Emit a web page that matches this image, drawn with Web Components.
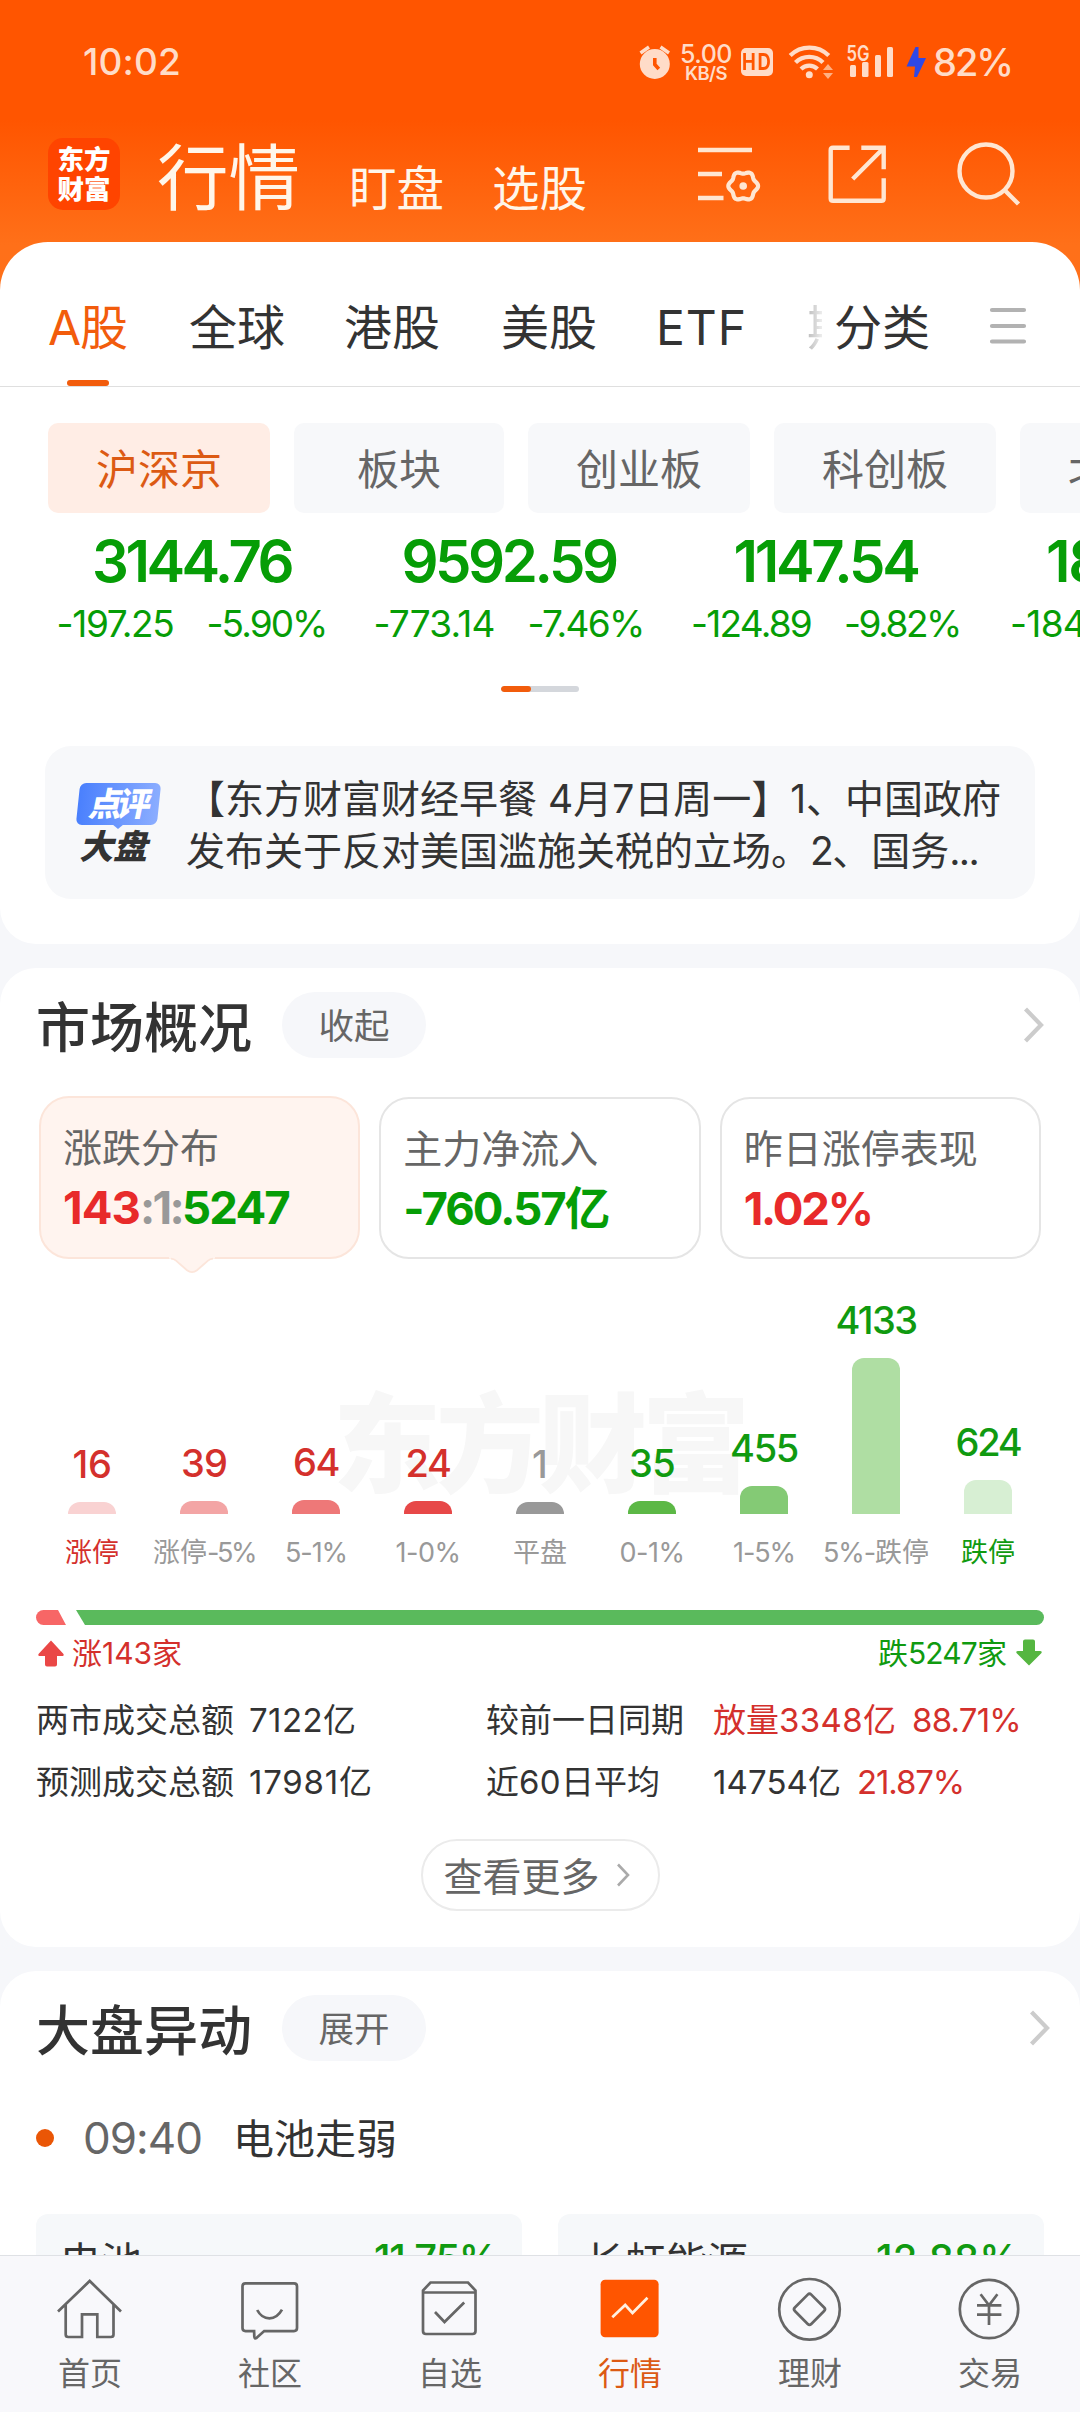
<!DOCTYPE html>
<html lang="zh-CN">
<head>
<meta charset="utf-8">
<title>行情</title>
<style>
html,body{margin:0;padding:0}
body{width:1080px;height:2412px;overflow:hidden;display:flex;flex-direction:column;background:#f6f7fa;
font-family:Inter,"Noto Sans CJK SC",sans-serif;color:#333}
body>*{box-sizing:border-box}
</style>
</head>
<body>
<app-header></app-header>
<market-panel></market-panel>
<overview-panel></overview-panel>
<movement-panel></movement-panel>
<bottom-nav></bottom-nav>
<script>
const BASE = `*{box-sizing:border-box}svg{display:block;overflow:visible;flex:none}ui-text{flex:none}`;
function component(name, css, html) {
  customElements.define(name, class extends HTMLElement {
    constructor() {
      super();
      this.attachShadow({mode: 'open'}).innerHTML = `<style>${BASE}${css}</style>${html}`;
    }
  });
}

// Six-lobed outline of the settings gear.
function gear(cx, cy) {
  let d = '';
  for (let a = 0; a < 360; a += 5) {
    const t = a * Math.PI / 180, r = 13.6 + 1.3 * Math.cos(6 * t);
    d += (a ? 'L' : 'M') + (cx + r * Math.cos(t)).toFixed(2) + ' ' + (cy + r * Math.sin(t)).toFixed(2);
  }
  return d + 'Z';
}

component('status-bar', `
:host{display:flex;height:124px;align-items:center;padding:0 68px 0 83px;color:#ffdcc8}
.r{margin-left:auto;display:flex;align-items:center}
.speed{display:flex;flex-direction:column;align-items:center;margin:0 10px;width:50px}
.speed ui-text+ui-text{margin-top:-3px}
.hd{width:32px;height:28px;border-radius:5px;background:#ffdcc8;color:#ff5500;display:flex;align-items:center;justify-content:center}
.hd ui-text{transform:scaleX(.8);margin:0 -5px}
`, `
<ui-text style="margin-top:-1px" fs="37" w="98" wt="500">10:02</ui-text>
<div class="r">
<svg width="32" height="36" viewBox="639 44 32 36"><circle cx="654.8" cy="64" r="15" fill="#ffdcc8"/><path d="M640.5 53l8.500-6M669 53l-8.500-6" stroke="#ffdcc8" stroke-width="3.400"/><path d="M654.800 58v6.500l4 4.500" fill="none" stroke="#ff5500" stroke-width="3.600"/></svg>
<div class="speed"><ui-text fs="25" w="52" wt="500">5.00</ui-text><ui-text fs="18.500" w="42" wt="600">KB/S</ui-text></div>
<div class="hd"><ui-text fs="23" w="32" wt="700">HD</ui-text></div>
<svg style="margin-left:16px" width="45" height="36" viewBox="789 44 45 36"><g fill="none" stroke="#ffdcc8" stroke-width="4.300"><path d="M790.200 55.500a27.500 27.500 0 0 1 38.500 0"/><path d="M795.500 62.500a19.500 19.500 0 0 1 27.500 0"/><path d="M801 69a12 12 0 0 1 16.500 0"/></g><circle cx="809.300" cy="74.700" r="3.500" fill="#ffdcc8"/><path d="M828 64l5 6h-10zM828 79l5-6h-10z" fill="#ffb083"/></svg>
<svg style="margin-left:13px" width="46" height="36" viewBox="847 44 46 36"><g fill="#ffdcc8"><rect x="850" y="65" width="6" height="12" rx="1.500"/><rect x="862" y="62" width="6.500" height="15" rx="1.500"/><rect x="875" y="55" width="6" height="22" rx="1.500"/><rect x="887" y="47" width="6" height="30" rx="1.500"/><text x="846.500" y="60.500" font-size="21" font-weight="600" textLength="23" lengthAdjust="spacingAndGlyphs">5G</text></g></svg>
<svg style="margin-left:13px" width="20" height="32" viewBox="906 46 20 32"><path d="M915.500 47L906.500 66.500h8.500l-1 10.500h3L926 58h-7.500V47z" fill="#2f48e6"/></svg>
<ui-text style="margin-left:7px" fs="38" w="79" wt="500">82%</ui-text>
</div>`);

component('app-logo', `
:host{display:flex;flex-direction:column;align-items:center;justify-content:center;width:72px;height:72px;border-radius:15px;background:#ff4400;color:#fff;font-weight:900;flex:none}
ui-text+ui-text{margin-top:3px}`,
`<ui-text fs="26.500">东方</ui-text><ui-text fs="26.500">财富</ui-text>`);

component('app-header', `
:host{display:block;height:290px;flex:none;background:linear-gradient(#ff5500 0,#ff5500 120px,#ff7019 245px,#ff701a 290px)}
.row{display:flex;align-items:flex-start;padding-left:48px;color:#fff6ea}
`, `
<status-bar></status-bar>
<div class="row">
<app-logo style="margin-top:14px"></app-logo>
<ui-text style="margin:19px 0 0 37px" fs="71.500">行情</ui-text>
<ui-text style="margin:41px 0 0 49px" fs="47.500">盯盘</ui-text>
<ui-text style="margin:41px 0 0 48px" fs="47.500">选股</ui-text>
<svg style="margin:16px 0 0 108px" width="70" height="70" viewBox="696 140 70 70" fill="none" stroke="#ffe6d2"><path d="M699 150h54M699 174h24M699 198h25.500" stroke-width="4.600"/><path d="${gear(744.2, 186)}" stroke-width="4.200" stroke-linejoin="round"/><circle cx="744.200" cy="186" r="3.800" fill="#ffe6d2" stroke="none"/></svg>
<svg style="margin:16px 0 0 60px" width="66" height="70" viewBox="826 140 66 70" fill="none" stroke="#ffe6d2" stroke-width="4.400"><path d="M850.600 147.700H834q-2.300 0-2.300 2.300v48.400q0 2.300 2.300 2.300h48.400q2.300 0 2.300-2.300V178.300M862.300 147.700h22.400v21.600M853.700 179l30-30"/></svg>
<svg style="margin:16px 0 0 62px" width="70" height="70" viewBox="954 140 70 70" fill="none" stroke="#ffe6d2" stroke-width="4.400"><circle cx="987" cy="171" r="26.500"/><path d="M1006 190.500l13.500 13.500"/></svg>
</div>`);

component('market-tabs', `
:host{display:grid;grid-template-columns:141px 155px 157px 155px 151px 27px 156px 40px;align-items:start;height:145px;padding:62px 0 0 48px;border-bottom:1.500px solid #dfdfdf}
.on{color:#f25c0c;position:relative}
.on i{position:absolute;left:19px;top:76px;width:42px;height:6px;border-radius:3px;background:#f25c0c}
.fade{width:15px;overflow:hidden;color:#bbb;-webkit-mask:linear-gradient(90deg,#000,#0004);mask:linear-gradient(90deg,#000,#0004)}
`, `
<div class="on"><ui-text fs="48" w="80">A股</ui-text><i></i></div>
<ui-text fs="48">全球</ui-text><ui-text fs="48">港股</ui-text><ui-text fs="48">美股</ui-text>
<ui-text fs="48" w="91">ETF</ui-text>
<div class="fade"><ui-text fs="48">期</ui-text></div>
<ui-text fs="48">分类</ui-text>
<svg width="36" height="48" viewBox="990 304 36 48"><path d="M992 310h32M992 326h32M992 341.500h32" stroke="#b2b2b2" stroke-width="4.200" stroke-linecap="round"/></svg>`);

component('board-chip', `
:host{display:flex;flex:none;width:222px;height:90px;border-radius:10px;background:#f7f8fa;color:#666;align-items:center;justify-content:center;padding-top:4px}
:host([on]){background:#ffede5;color:#dc5a14}
:host([narrow]){width:210px}
`, `<ui-text fs="42"><slot></slot></ui-text>`);

customElements.define('index-quote', class extends HTMLElement {
  constructor() {
    super();
    const g = n => this.getAttribute(n);
    this.attachShadow({mode: 'open'}).innerHTML = `<style>${BASE}
:host{display:flex;flex-direction:column;align-items:center;color:#069d06}
:host([cut]){align-items:flex-start;padding-left:26px}
:host([cut]) .v{margin-left:36px}
.s{display:flex;gap:33px;margin-top:15px}</style>
<ui-text class="v" fs="58" w="${g('vw')}" wt="600">${g('v')}</ui-text>
<div class="s"><ui-text fs="37" w="${g('dw')}">${g('d')}</ui-text>${g('p') ? `<ui-text fs="37" w="${g('pw')}">${g('p')}</ui-text>` : ''}</div>`;
  }
});

component('comment-badge', `
:host{display:flex;flex-direction:column;align-items:center;width:86px;flex:none;position:relative;font-weight:900}
.b{width:81px;height:42px;border-radius:6px;transform:skewX(-6deg);background:linear-gradient(90deg,#4a80fd,#8badff);display:flex;align-items:center;justify-content:center;color:#fff}
.b ui-text{transform:skewX(-6deg)}
svg{margin-top:-1px}
.d{transform:skewX(-14deg);margin:1px 0 0 -5px}
`, `<div class="b"><ui-text fs="33" w="64">点评</ui-text></div>
<svg width="12" height="5" viewBox="0 0 12 5"><path d="M0 0h12L6 5z" fill="#6a97fe"/></svg>
<ui-text class="d" fs="34">大盘</ui-text>`);

component('market-panel', `
:host{display:block;height:702px;flex:none;margin-top:-48px;background:#fff;border-radius:48px 48px 36px 36px;overflow:hidden;position:relative}
.chips{display:flex;gap:24px;margin:36px 0 0 48px}
.idx{display:grid;grid-template-columns:repeat(4,317px);margin:19px 0 0 33px;width:1268px}
.pager{width:78px;height:6px;border-radius:3px;background:#d4d7dc;margin:44px auto 0;overflow:hidden}
.pager i{display:block;width:30px;height:6px;border-radius:3px;background:#f25c0c}
.c{display:flex;align-items:flex-start;margin:54px 45px 0;height:153px;border-radius:26px;background:#f7f8fa;padding:26px 0 0 30px}
comment-badge{margin-top:11px}
.t{margin-left:25px}
.t ui-text{margin:6.500px 0}
.t ui-text+ui-text{margin-top:13px}
`, `
<market-tabs></market-tabs>
<div class="chips"><board-chip on>沪深京</board-chip><board-chip narrow>板块</board-chip><board-chip>创业板</board-chip><board-chip>科创板</board-chip><board-chip>北交所</board-chip></div>
<div class="idx">
<index-quote v="3144.76" vw="199" d="-197.25" dw="117" p="-5.90%" pw="120"></index-quote>
<index-quote v="9592.59" vw="214" d="-773.14" dw="121" p="-7.46%" pw="116"></index-quote>
<index-quote v="1147.54" vw="184" d="-124.89" dw="120" p="-9.82%" pw="116"></index-quote>
<index-quote cut v="18" vw="57" d="-184" dw="76"></index-quote>
</div>
<div class="pager"><i></i></div>
<div class="c"><comment-badge></comment-badge>
<div class="t"><ui-text fs="39" w="815">【东方财富财经早餐 4月7日周一】1、中国政府</ui-text><ui-text fs="39" w="792">发布关于反对美国滥施关税的立场。2、国务...</ui-text></div></div>`);

customElements.define('section-head', class extends HTMLElement {
  constructor() {
    super();
    this.attachShadow({mode: 'open'}).innerHTML = `<style>${BASE}
:host{display:flex;align-items:center;height:66px;padding-left:36px}
.t{font-weight:500;margin-top:7px}
.p{width:144px;height:66px;border-radius:33px;background:#f6f7fa;color:#666;display:flex;align-items:center;justify-content:center;margin-left:30px;padding-top:4px}
svg{margin-left:auto}</style>
<ui-text class="t" fs="54">${this.getAttribute('label')}</ui-text>
<div class="p"><ui-text fs="35.500">${this.getAttribute('action')}</ui-text></div>
<svg width="21" height="36" viewBox="0 0 21 36"><path d="M2.500 2L18 18 2.500 34" fill="none" stroke="#ccc" stroke-width="4.200"/></svg>`;
  }
});

component('stat-card', `
:host{display:block;position:relative;height:162px;border:2px solid #e5e5e5;border-radius:30px;padding:30px 0 0 22px;color:#666;background:#fff}
:host([on]){background:#fff4ef;border-color:#fce5da;height:163px}
.v{display:flex;margin-top:18px}
svg{display:none;position:absolute;left:128px;top:158.500px}
:host([on]) svg{display:block}
`, `<slot name="label"></slot><div class="v"><slot></slot></div>
<svg width="46" height="18" viewBox="0 0 46 18"><path d="M0 0h46v1.500q-4 .2-7 2.600l-11 9.500q-5 3.800-10 0L7 4.100Q4 1.700 0 1.500z" fill="#fff4ef"/><path d="M2 1.600q3 .3 5 2l11 9.700q5 3.600 10 0l11-9.700q2-1.700 5-2" fill="none" stroke="#fce5da" stroke-width="1.800"/></svg>`);

customElements.define('dist-bar', class extends HTMLElement {
  constructor() {
    super();
    const g = n => this.getAttribute(n);
    this.attachShadow({mode: 'open'}).innerHTML = `<style>${BASE}
:host{display:flex;flex-direction:column;align-items:center;color:${g('tone')}}
.a{height:224px;display:flex;flex-direction:column;align-items:center;justify-content:flex-end}
i{display:block;width:48px;height:${g('h')}px;margin-top:19px;border-radius:12px 12px 0 0;background:${g('fill')}}
.l{margin-top:25px;color:${g('ltone') || '#999'}}</style>
<div class="a"><ui-text fs="38" w="${g('nw')}" wt="500">${g('n')}</ui-text><i></i></div>
<ui-text class="l" fs="27" w="${g('lw')}">${g('l')}</ui-text>`;
  }
});

const R = '#d4302c', G = '#109a10';
component('distribution-chart', `
:host{display:grid;grid-template-columns:repeat(9,112px);padding:0 36px;margin-top:31px;position:relative}
.wm{position:absolute;left:333px;top:101px;color:#f7f7f7;font-weight:900}
dist-bar{position:relative}
`, `<ui-text class="wm" fs="108" w="412">东方财富</ui-text>` + [
  ['16', 39, 12, '#f9d2d2', R, '涨停', 54, R],
  ['39', 46, 13, '#f3a5a5', R, '涨停-5%', 102],
  ['64', 46, 14, '#ee7878', R, '5-1%', 62],
  ['24', 45, 13, '#e74848', R, '1-0%', 65],
  ['1', 16, 12, '#999', '#999', '平盘', 54],
  ['35', 46, 13, '#5cb846', G, '0-1%', 65],
  ['455', 68, 28, '#84ca75', G, '1-5%', 62],
  ['4133', 81, 156, '#afdea3', G, '5%-跌停', 106],
  ['624', 65, 34, '#d7efd3', G, '跌停', 54, G]
].map(b => `<dist-bar n="${b[0]}" nw="${b[1]}" h="${b[2]}" fill="${b[3]}" tone="${b[4]}" l="${b[5]}" lw="${b[6]}" ${b[7] ? `ltone="${b[7]}"` : ''}></dist-bar>`).join(''));

component('ratio-bar', `
:host{display:block;margin:44px 36px 0}
.bar{display:flex;height:15px;gap:1px}
.u{width:30px;background:#f76666;border-radius:8px 0 0 8px;clip-path:polygon(0 0,22px 0,100% 100%,0 100%)}
.d{flex:1;margin-left:9px;background:#5aba5c;border-radius:0 8px 8px 0;clip-path:polygon(0 0,100% 0,100% 100%,9px 100%)}
.n{display:flex;align-items:center;margin-top:13px;height:30px}
.r{margin-left:auto;display:flex;align-items:center}
`, `<div class="bar"><div class="u"></div><div class="d"></div></div>
<div class="n" style="color:${R}"><svg width="30" height="28" viewBox="0 0 30 28"><path d="M15 1.500L27.500 15q.8 2-1.500 2h-5v8.500q0 2-2 2h-8q-2 0-2-2V17H4q-2.300 0-1.500-2z" fill="#ea4746"/></svg>
<ui-text style="margin-left:6px" fs="30" w="110">涨143家</ui-text>
<div class="r" style="color:${G}"><ui-text fs="30" w="129">跌5247家</ui-text><svg style="margin-left:7px" width="30" height="28" viewBox="0 0 30 28"><path d="M15 26.500L27.500 14q.8-2-1.500-2h-5V2.500q0-2-2-2h-8q-2 0-2 2V12H4q-2.300 0-1.500 2z" fill="#55b640"/></svg></div></div>`);

component('turnover-table', `
:host{display:grid;grid-template-columns:213px 237px 227px 1fr;row-gap:29px;padding:0 36px;margin-top:36px;color:#333}
.x{display:flex;gap:16px}
`, `
<ui-text fs="33">两市成交总额</ui-text><ui-text fs="33" w="107">7122亿</ui-text><ui-text fs="33">较前一日同期</ui-text><div class="x" style="color:${R}"><ui-text fs="33" w="183">放量3348亿</ui-text><ui-text fs="33" w="109">88.71%</ui-text></div>
<ui-text fs="33">预测成交总额</ui-text><ui-text fs="33" w="123">17981亿</ui-text><ui-text fs="33" w="174">近60日平均</ui-text><div class="x"><ui-text fs="33" w="128">14754亿</ui-text><ui-text fs="33" w="107" style="color:${R}">21.87%</ui-text></div>`);

component('more-button', `
:host{display:flex;align-items:center;width:239px;height:72px;margin:40px auto 0;border:2.500px solid #ebebeb;border-radius:36px;color:#666;padding:0 0 0 21px}
ui-text{margin-top:2px}
svg{margin-left:16px}
`, `<ui-text fs="39">查看更多</ui-text><svg width="14" height="24" viewBox="0 0 14 24"><path d="M2 1.500L12 12 2 22.500" fill="none" stroke="#aaa" stroke-width="2.600"/></svg>`);

component('overview-panel', `
:host{display:block;height:979px;flex:none;margin-top:24px;background:#fff;border-radius:36px;padding-top:24px}
.cards{display:grid;grid-template-columns:repeat(3,1fr);gap:19px;margin:38px 39px 0;height:163px;align-items:center}
`, `
<section-head label="市场概况" action="收起" style="padding-right:36px"></section-head>
<div class="cards">
<stat-card on><ui-text slot="label" fs="39">涨跌分布</ui-text><ui-text fs="45.500" wt="700" w="77" style="color:#e82a2a">143</ui-text><ui-text fs="45.500" wt="700" w="42" style="color:#999">:1:</ui-text><ui-text fs="45.500" wt="700" w="107" style="color:#069d06">5247</ui-text></stat-card>
<stat-card><ui-text slot="label" fs="39">主力净流入</ui-text><ui-text fs="45.500" wt="700" w="207" style="color:#069d06">-760.57亿</ui-text></stat-card>
<stat-card><ui-text slot="label" fs="39">昨日涨停表现</ui-text><ui-text fs="45.500" wt="700" w="128" style="color:#e82a2a">1.02%</ui-text></stat-card>
</div>
<distribution-chart></distribution-chart>
<ratio-bar></ratio-bar>
<turnover-table></turnover-table>
<more-button></more-button>`);

component('movement-panel', `
:host{display:block;height:284px;flex:none;margin-top:24px;background:#fff;border-radius:36px 36px 0 0;padding-top:24px;overflow:hidden}
.e{display:flex;align-items:center;height:44px;margin:55px 0 0 36px}
.e i{width:18px;height:18px;border-radius:9px;background:#ea5606}
.g{display:grid;grid-template-columns:1fr 1fr;gap:36px;margin:54px 36px 0}
.k{display:flex;align-items:flex-start;justify-content:space-between;height:140px;border-radius:12px;background:#f6f8fa;padding:28px 25px 0 24px}
.k ui-text+ui-text{margin-top:-3px;color:#109a10}
`, `
<section-head label="大盘异动" action="展开" style="padding-right:30px"></section-head>
<div class="e"><i></i><ui-text style="margin-left:29px;color:#666" fs="44" w="119">09:40</ui-text><ui-text style="margin:3px 0 0 31px" fs="41">电池走弱</ui-text></div>
<div class="g"><div class="k"><ui-text fs="41">电池</ui-text><ui-text fs="40" w="123" wt="500">11.75%</ui-text></div><div class="k" style="padding-left:26px"><ui-text fs="41">长虹能源</ui-text><ui-text fs="40" w="143" wt="500">12.88%</ui-text></div></div>`);

component('nav-item', `
:host{display:flex;flex-direction:column;align-items:center;color:#666;padding-top:18px}
:host([on]){color:#dc5a14}
::slotted(svg){display:block;width:70px;height:70px;margin-bottom:14px;fill:none;stroke:#666;stroke-width:2.700px}
`, `<slot name="icon"></slot><ui-text fs="32"><slot></slot></ui-text>`);

component('bottom-nav', `
:host{display:grid;grid-template-columns:repeat(6,180px);height:157px;flex:none;background:#f8f8fb;border-top:1.500px solid #dfe1e5}
`, `
<nav-item><svg slot="icon" viewBox="55 2274 70 70"><path d="M58 2311.500L89.700 2281l31.300 30.500M65.700 2305v29.500q0 2.500 2.500 2.500H82v-22.700h15.300V2337h13.700q2.500 0 2.500-2.500V2305"/></svg>首页</nav-item>
<nav-item><svg slot="icon" viewBox="235 2274 70 70"><path d="M245.500 2283.300h48.500q3 0 3 3v41.800q0 3-3 3h-29.800l-7.500 6.700q-2.300 1.600-2.400-1.300l-.2-5.400h-8.600q-3 0-3-3v-41.800q0-3 3-3z"/><path d="M257.200 2310q4.300 8.300 12.200 8.300t12.600-8.600"/></svg>社区</nav-item>
<nav-item><svg slot="icon" viewBox="415 2274 70 70"><path d="M430.500 2282.500H468l7.500 8v40.500q0 3-3 3H426q-3 0-3-3v-40.500zM423 2292.500h52.500M435 2312l9.500 10 19.700-19.500"/></svg>自选</nav-item>
<nav-item on><svg slot="icon" viewBox="595 2274 70 70"><rect x="600.600" y="2279.700" width="58" height="57.500" rx="4.500" fill="#ff5500" stroke="none"/><path d="M612.300 2317.300L625.200 2305l7.300 8 15-15.300" stroke="#fff0e0"/></svg>行情</nav-item>
<nav-item><svg slot="icon" viewBox="775 2274 70 70"><circle cx="809.500" cy="2309.300" r="30.300"/><rect x="797.900" y="2297.700" width="23.200" height="23.200" rx="2.500" transform="rotate(45 809.500 2309.300)"/></svg>理财</nav-item>
<nav-item><svg slot="icon" viewBox="955 2274 70 70"><circle cx="989" cy="2309" r="29.200"/><path d="M980.600 2294.300l8.400 11 8.400-11M977 2305.400h24.400M977 2314.700h24.400M989 2305.400V2325"/></svg>交易</nav-item>`);

// Single-line text: fs = font size, wt = weight, w = advance width.
// The tracking that reaches w goes to the Latin runs; a purely Chinese text is tracked as a whole.
customElements.define('ui-text', class extends HTMLElement {
  connectedCallback() {
    if (this.shadowRoot) return;
    const fs = this.getAttribute('fs'), w = parseFloat(this.getAttribute('w')), wt = this.getAttribute('wt');
    const text = this.textContent;
    const root = this.attachShadow({mode: 'open'});
    const body = w ? text.split(/([\x21-\x7e]+)/).filter(Boolean)
      .map(s => `<b class="${/^[\x21-\x7e]/.test(s) ? 'n' : 'c'}">${s}</b>`).join('') : '<slot></slot>';
    root.innerHTML = `<style>:host{display:block;width:max-content;white-space:pre;font-size:${fs}px;line-height:${fs}px;height:${fs}px;${wt ? `font-weight:${wt};` : ''}}span{display:inline-block;line-height:${fs}px;vertical-align:top}b{font-weight:inherit}</style><span>${body}</span>`;
    if (w) {
      this.textContent = '';
      let runs = [...root.querySelectorAll('.n')];
      if (!runs.length) runs = [...root.querySelectorAll('.c')];
      const count = runs.reduce((n, r) => n + r.textContent.length, 0);
      const gap = (w - root.querySelector('span').getBoundingClientRect().width) / count;
      runs.forEach(r => r.style.letterSpacing = gap.toFixed(3) + 'px');
    }
  }
});
</script>
</body>
</html>
